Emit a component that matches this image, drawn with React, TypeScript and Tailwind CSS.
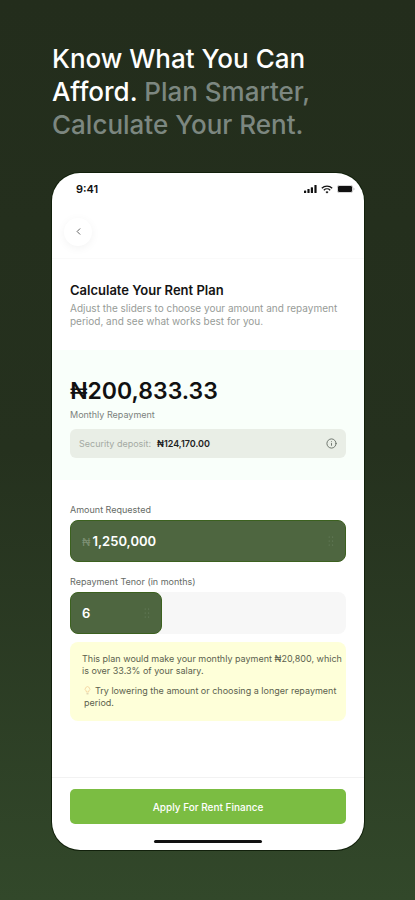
import { useState } from "react";
import type { ReactNode } from "react";
import { ChevronLeft, Info } from "lucide-react";

function StatusIcons() {
  return (
    <div className="flex items-center gap-1" aria-hidden="true">
      <svg width="13" height="8" viewBox="0 0 13 8" fill="#111">
        <rect x="0" y="5.4" width="2.2" height="2.6" rx="0.6" />
        <rect x="3.4" y="4" width="2.2" height="4" rx="0.6" />
        <rect x="6.8" y="2.2" width="2.2" height="5.8" rx="0.6" />
        <rect x="10.4" y="0" width="2.2" height="8" rx="0.6" />
      </svg>
      <svg width="12" height="9" viewBox="0 0 12 9" fill="none" stroke="#111" strokeWidth="1.3">
        <path d="M0.8 3.2a7.4 7.4 0 0 1 10.4 0" />
        <path d="M2.8 5.2a4.6 4.6 0 0 1 6.4 0" />
        <path d="M6 8.6 4.5 6.9a2.2 2.2 0 0 1 3 0Z" fill="#111" stroke="none" />
      </svg>
      <svg width="18" height="8" viewBox="0 0 18 8">
        <rect x="0.3" y="0.3" width="15.4" height="7.4" rx="2" fill="none" stroke="#999" strokeWidth="0.5" />
        <rect x="1" y="1" width="14" height="6" rx="1.3" fill="#111" />
        <path d="M16.6 2.8v2.4q0.9-0.3 0.9-1.2t-0.9-1.2Z" fill="#aaa" />
      </svg>
    </div>
  );
}

function Grip() {
  return (
    <svg width="6" height="14" viewBox="0 0 6 14" fill="#6d8263" aria-hidden="true">
      <circle cx="1.2" cy="3" r="0.6" />
      <circle cx="4.6" cy="3" r="0.6" />
      <circle cx="1.2" cy="7" r="0.6" />
      <circle cx="4.6" cy="7" r="0.6" />
      <circle cx="1.2" cy="11" r="0.6" />
      <circle cx="4.6" cy="11" r="0.6" />
    </svg>
  );
}

interface SliderProps {
  id: string;
  label: string;
  min: number;
  max: number;
  step: number;
  value: number;
  onChange: (value: number) => void;
  children: ReactNode;
}

function FillSlider({ id, label, min, max, step, value, onChange, children }: SliderProps) {
  const share = Math.max(20, (value / max) * 100);
  return (
    <div>
      <label htmlFor={id} className="block text-[9px] leading-3 text-[#666b66]">
        {label}
      </label>
      <div className="relative mt-1 h-[42px] rounded-lg bg-[#f7f7f7]">
        <div
          className="flex h-full items-center justify-between rounded-lg border border-[#3c611f] bg-[#4e6640] px-[11px]"
          style={{ width: `${share}%` }}
        >
          <output htmlFor={id} className="text-[13px] leading-4 font-semibold text-white">
            {children}
          </output>
          <Grip />
        </div>
        <input
          id={id}
          type="range"
          min={min}
          max={max}
          step={step}
          value={value}
          onChange={(event) => onChange(Number(event.target.value))}
          className="absolute inset-0 h-full w-full cursor-pointer opacity-0"
        />
      </div>
    </div>
  );
}

export default function App() {
  const [amount, setAmount] = useState(1250000);
  const [months, setMonths] = useState(6);

  return (
    <main className="min-h-screen bg-linear-to-b from-[#232d1c] via-[#25311e] to-[#32482a] pt-[42px] pr-[51px] pb-12 pl-[52px] font-['Inter','Liberation_Sans',sans-serif]">
      <h1 className="text-[26px] leading-[33px] font-medium text-white">
        Know What You Can
        <br />
        Afford. <span className="text-[#7c8780]">Plan Smarter,</span>
        <br />
        <span className="text-[#7c8780]">Calculate Your Rent.</span>
      </h1>

      <section className="mt-8 overflow-hidden rounded-[28px] bg-white shadow-[0_0_0_1px_#11200b]">
        <div className="flex h-8 items-center justify-between pr-[9px] pl-6">
          <span className="text-[11px] leading-4 font-semibold text-[#111]">9:41</span>
          <StatusIcons />
        </div>

        <header className="flex h-[54px] items-center border-b border-[#fafafa] px-3">
          <button
            type="button"
            aria-label="Back"
            className="flex size-7 items-center justify-center rounded-full bg-white text-[#555] shadow-[0_2px_10px_rgba(0,0,0,0.05)]"
          >
            <ChevronLeft size={11} strokeWidth={2} />
          </button>
        </header>

        <div className="px-[18px] pt-[23px] pb-[22px]">
          <h2 className="text-[13px] leading-4 font-semibold text-[#141414]">Calculate Your Rent Plan</h2>
          <p className="mt-1 text-[10px] leading-[13px] text-[#979c98]">
            Adjust the sliders to choose your amount and repayment period, and see what works best for you.
          </p>
        </div>

        <div className="bg-[#f9fffa] px-[18px] pt-[27px] pb-[22px]">
          <p className="text-[23px] leading-7 font-semibold text-[#111]">₦200,833.33</p>
          <p className="mt-1 text-[9px] leading-3 text-[#7c827d]">Monthly Repayment</p>
          <div className="mt-2 flex h-[29px] items-center rounded-md bg-[#e9eee6] px-[9px] text-[9px] leading-3">
            <span className="text-[#a4aaa3]">Security deposit:</span>
            <span className="ml-1.5 font-semibold text-[#222]">₦124,170.00</span>
            <button type="button" aria-label="About the security deposit" className="ml-auto text-[#666d65]">
              <Info size={11} strokeWidth={2} />
            </button>
          </div>
        </div>

        <div className="px-[18px] pt-6 pb-14">
          <div className="flex flex-col gap-[14px]">
            <FillSlider
              id="amount"
              label="Amount Requested"
              min={0}
              max={1250000}
              step={50000}
              value={amount}
              onChange={setAmount}
            >
              <span className="mr-0.5 text-[11px] font-normal text-[#7d9073]">₦</span>
              {amount.toLocaleString("en-US")}
            </FillSlider>
            <FillSlider
              id="tenor"
              label="Repayment Tenor (in months)"
              min={1}
              max={18}
              step={1}
              value={months}
              onChange={setMonths}
            >
              {months}
            </FillSlider>
          </div>

          <div className="mt-2 rounded-lg bg-[#feffd9] pt-[11px] pr-1 pb-3 pl-3 text-[9px] leading-3 text-[#5c5f4e]">
            <p>
              This plan would make your monthly payment ₦20,800, which is over 33.3% of your salary.
            </p>
            <p className="mt-2 pl-0.5">
              <svg
                className="mr-1 inline-block align-[-1px]"
                width="7"
                height="9"
                viewBox="0 0 7 9"
                fill="none"
                stroke="#f3cf9a"
                strokeWidth="0.8"
                aria-hidden="true"
              >
                <path d="M2.3 6V5A2.3 2.3 0 1 1 4.7 5v1Z" />
                <path d="M2.5 7.8h2" stroke="#c9b79a" />
              </svg>
              Try lowering the amount or choosing a longer repayment period.
            </p>
          </div>
        </div>

        <footer className="border-t border-[#f2f2f2] px-[18px] pt-[11px] pb-[7px]">
          <button
            type="button"
            className="h-[35px] w-full rounded-[5px] bg-[#7bbd42] text-[10px] leading-4 font-medium text-white"
          >
            Apply For Rent Finance
          </button>
          <div className="mx-auto mt-4 h-[3px] w-[108px] rounded-full bg-[#111]" />
        </footer>
      </section>
    </main>
  );
}
